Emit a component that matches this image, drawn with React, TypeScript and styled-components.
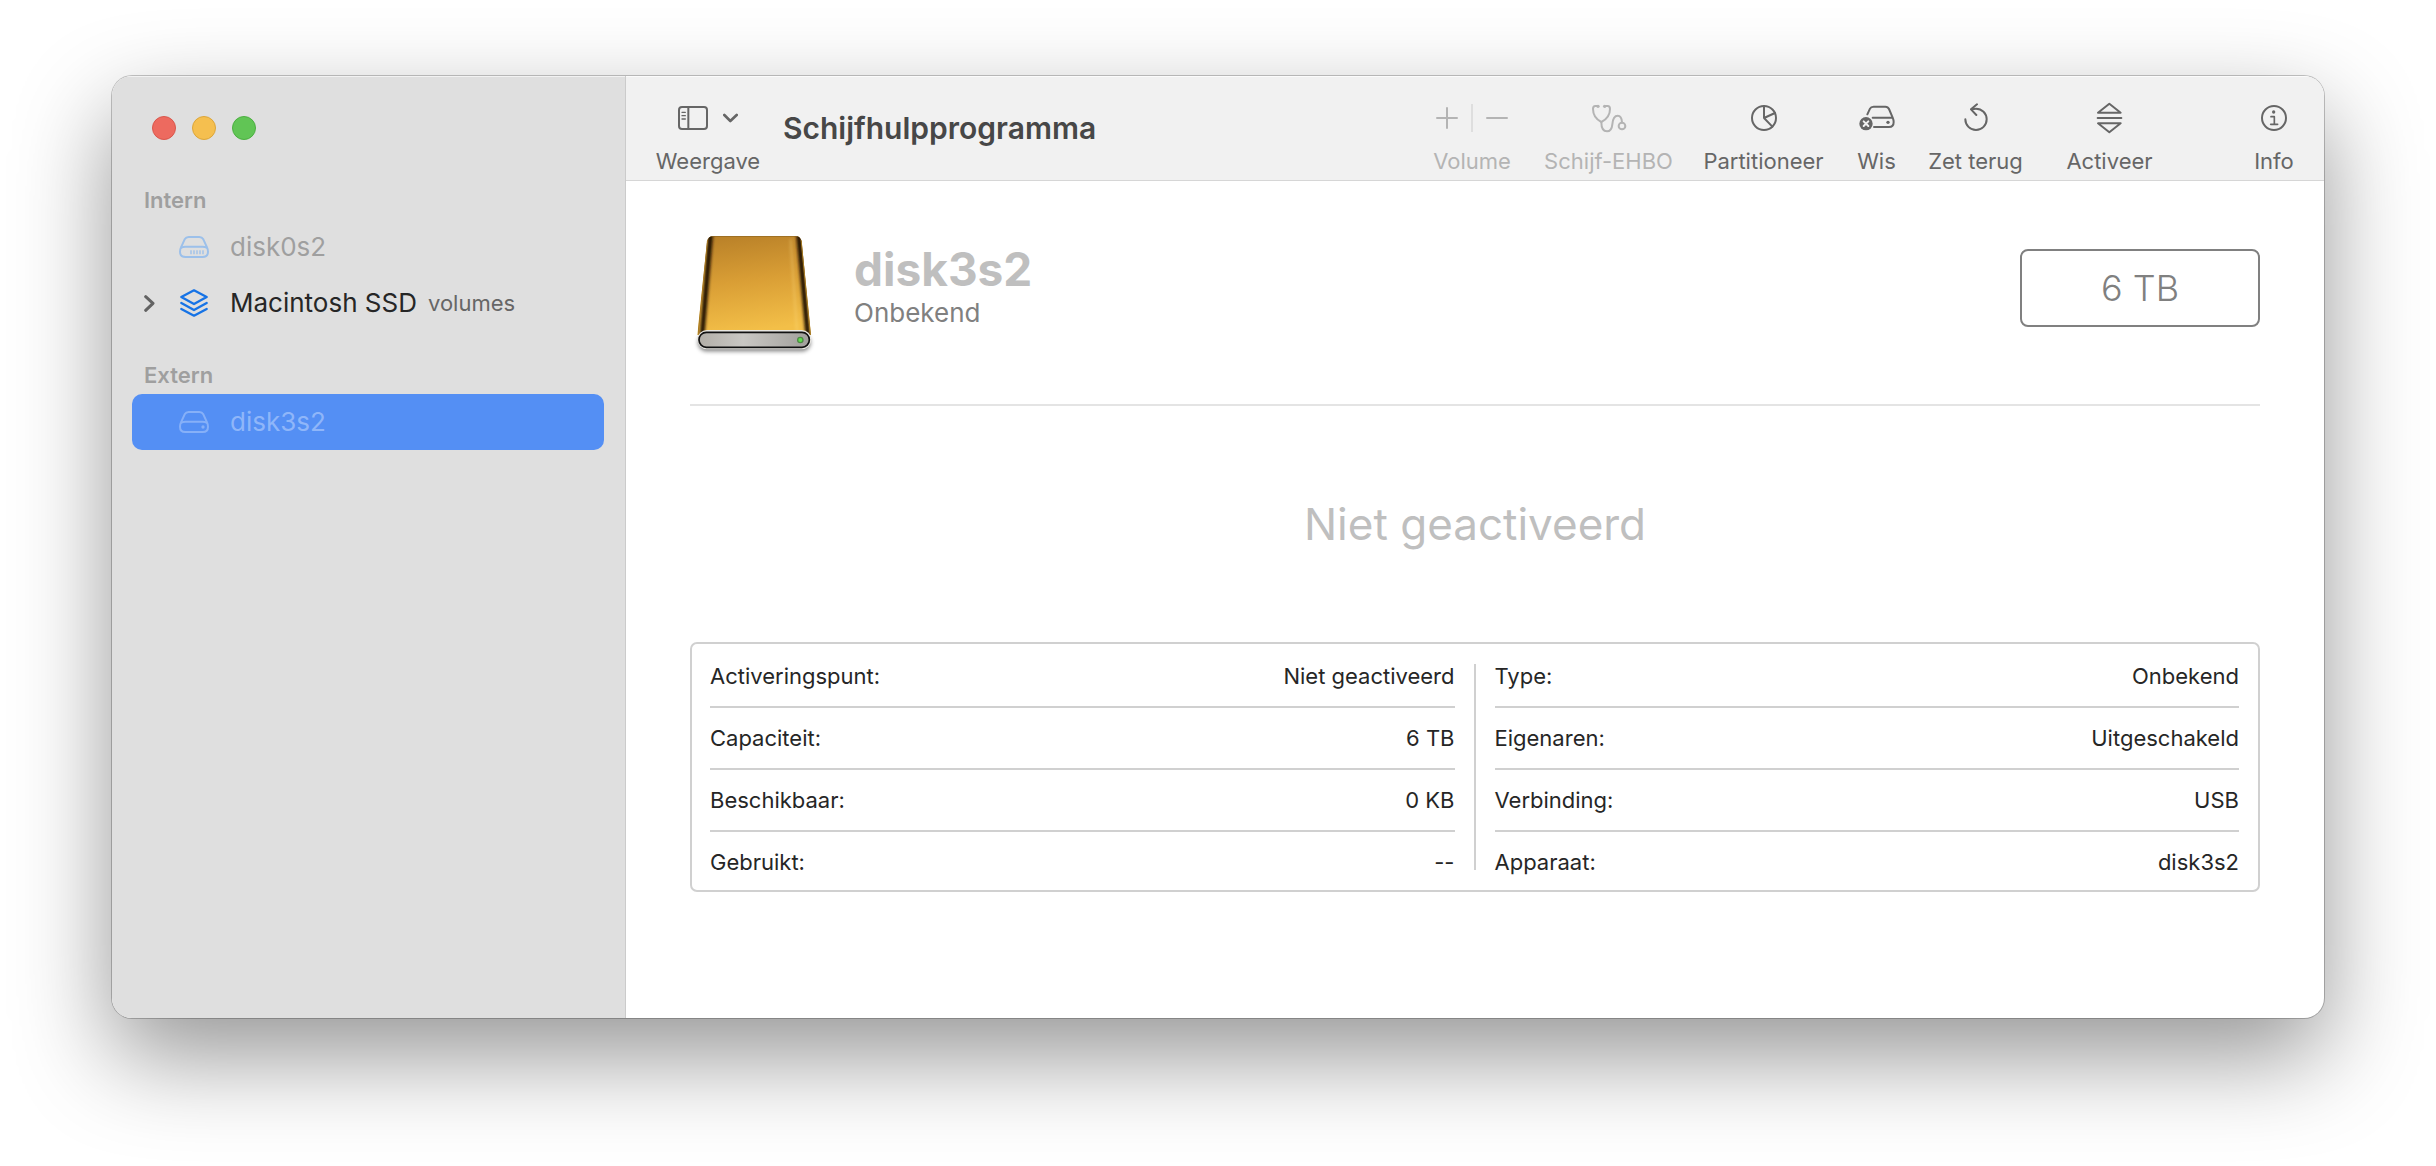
import React from "react";
import styled, { createGlobalStyle } from "styled-components";

const GlobalStyle = createGlobalStyle`
  * { box-sizing: border-box; }
  body {
    margin: 0;
    background: #fff;
    font-family: Inter, "Liberation Sans", sans-serif;
    color: #262626;
  }
  button {
    font: inherit;
    color: inherit;
    background: none;
    border: 0;
    padding: 0;
    margin: 0;
    text-align: left;
  }
  svg { display: block; flex: none; }
`;

const Desktop = styled.div`
  padding: 76px 112px 148px;
`;

const Window = styled.div`
  display: flex;
  border-radius: 20px;
  overflow: hidden;
  background: #fff;
  box-shadow:
    0 0 0 1px rgba(0, 0, 0, 0.22),
    0 38px 96px rgba(0, 0, 0, 0.42);
`;

const Sidebar = styled.aside`
  flex: none;
  width: 514px;
  padding: 40px 21px 0 20px;
  background: #dfdfdf;
  border-right: 1px solid #cbcbcb;
  box-shadow: inset 0 1px 0 #f2f2f2;
`;

const TrafficLights = styled.div`
  display: flex;
  gap: 16px;
  padding-left: 20px;
  margin-bottom: 41px;
`;

const Light = styled.button<{ $fill: string; $edge: string }>`
  width: 24px;
  height: 24px;
  border-radius: 50%;
  background: ${(p) => p.$fill};
  border: 1px solid ${(p) => p.$edge};
`;

const Group = styled.section`
  margin-bottom: 25px;
`;

const GroupTitle = styled.h2`
  margin: 0;
  padding-left: 12px;
  font-size: 22px;
  line-height: 38px;
  font-weight: 600;
  color: #9f9f9f;
`;

const Row = styled.button<{ $selected?: boolean; $dim?: boolean }>`
  display: flex;
  align-items: center;
  width: 100%;
  height: 56px;
  padding-left: 12px;
  border-radius: 10px;
  font-size: 26px;
  line-height: 32px;
  background: ${(p) => (p.$selected ? "#548ff4" : "transparent")};
  color: ${(p) => (p.$selected ? "#8fb6f9" : p.$dim ? "#9f9f9f" : "#262626")};
`;

const Disclosure = styled.span`
  width: 35px;
  color: #636363;
`;

const RowIcon = styled.span<{ $color: string }>`
  display: flex;
  justify-content: center;
  width: 30px;
  margin-right: 21px;
  color: ${(p) => p.$color};
`;

const RowNote = styled.span`
  margin-left: 11px;
  font-size: 22px;
  color: #666;
`;

const Main = styled.main`
  flex: 1;
  min-width: 0;
`;

const Toolbar = styled.header`
  display: flex;
  align-items: center;
  height: 105px;
  padding: 0 15px 0 16px;
  background: #f1f1f1;
  border-bottom: 1px solid #d6d6d6;
  box-shadow: inset 0 1px 0 #fbfbfb;
`;

const Tool = styled.div<{ $width: number; $off?: boolean; $apart?: boolean }>`
  display: flex;
  flex-direction: column;
  align-items: center;
  gap: 10px;
  width: ${(p) => p.$width}px;
  margin-left: ${(p) => (p.$apart ? 55 : 0)}px;
  padding-top: 16px;
  color: ${(p) => (p.$off ? "#b4b4b4" : "#666")};
`;

const ToolButton = styled(Tool).attrs({ as: "button" })``;

const ToolIcon = styled.span<{ $gap?: number }>`
  display: flex;
  align-items: center;
  justify-content: center;
  gap: ${(p) => p.$gap ?? 0}px;
  height: 40px;
`;

const ToolLabel = styled.span`
  font-size: 22px;
  line-height: 26px;
  white-space: nowrap;
`;

const Separator = styled.span`
  width: 2px;
  height: 28px;
  background: #dedede;
`;

const WindowTitle = styled.h1`
  flex: 1;
  margin: 0;
  padding-left: 9px;
  font-size: 30px;
  line-height: 40px;
  font-weight: 600;
  color: #474747;
`;

const Content = styled.div`
  padding: 39px 64px 126px;
`;

const Device = styled.section`
  display: flex;
  align-items: center;
  padding-bottom: 48px;
  border-bottom: 2px solid #e4e4e4;
`;

const DeviceText = styled.div`
  flex: 1;
  padding: 6px 0 0 36px;
`;

const DeviceName = styled.h2`
  margin: 0;
  font-size: 46px;
  line-height: 44px;
  font-weight: 700;
  color: #bfbfbf;
`;

const DeviceKind = styled.p`
  margin: 0;
  font-size: 26px;
  line-height: 44px;
  color: #808080;
`;

const Capacity = styled.div`
  width: 240px;
  border: 2px solid #808080;
  border-radius: 8px;
  font-size: 36px;
  line-height: 74px;
  font-weight: 300;
  text-align: center;
  color: #808080;
`;

const Status = styled.p`
  margin: 0;
  padding: 88px 0;
  font-size: 44px;
  line-height: 60px;
  text-align: center;
  color: #bfbfbf;
`;

const Details = styled.section`
  display: grid;
  grid-template-columns: 1fr 2px 1fr;
  column-gap: 19px;
  padding: 2px 19px 0 18px;
  border: 2px solid #d0d0d0;
  border-radius: 7px;
`;

const DetailsDivider = styled.div`
  margin: 18px 0 20px;
  background: #d0d0d0;
`;

const DetailTable = styled.table`
  width: 100%;
  border-spacing: 0;
  font-size: 22px;
  line-height: 30px;
  color: #262626;

  th, td {
    padding: 15px 0;
    border-bottom: 2px solid #d0d0d0;
  }
  tr:last-child > * {
    padding-bottom: 13px;
    border-bottom: 0;
  }
  th {
    font-weight: 400;
    text-align: left;
  }
  td {
    text-align: right;
  }
`;

const line = {
  fill: "none",
  stroke: "currentColor",
  strokeWidth: 6,
  strokeLinecap: "round",
  strokeLinejoin: "round",
} as const;

const DriveIcon = ({ vents }: { vents?: boolean }) => (
  <svg width="30" height="22" viewBox="0 0 90 66" {...line}>
    <path d="M17 10Q21 3 29 3H61Q69 3 73 10L84 34Q87 40 87 47Q87 63 71 63H19Q3 63 3 47Q3 40 6 34Z" />
    <path d="M7 35Q12 32 19 32H71Q78 32 83 35" />
    {vents ? (
      <path strokeWidth="4" strokeLinecap="butt" d="M36 43V55M45 43V55M54 43V55M63 43V55M72 43V55" />
    ) : (
      <circle cx="72" cy="48" r="5" fill="currentColor" stroke="none" />
    )}
  </svg>
);

const LayersIcon = () => (
  <svg width="28" height="28" viewBox="-1 0 84 84" {...line} strokeWidth="7">
    <path d="M41 4L79 24L41 45L3 24Z" />
    <path d="M3 42L41 63L79 42M3 60L41 80L79 60" />
  </svg>
);

const ChevronRight = () => (
  <svg width="11" height="17" viewBox="0 0 33 51" {...line} strokeWidth="9">
    <path d="M5 5L27 25L5 46" />
  </svg>
);

const SidebarIcon = () => (
  <svg width="30" height="24" viewBox="0 0 90 72" {...line}>
    <rect x="3" y="3" width="84" height="66" rx="9" />
    <path d="M31 3V69" />
    <path strokeWidth="4" d="M12 19H22M12 29H22M12 39H22" />
  </svg>
);

const ChevronDown = () => (
  <svg width="15" height="10" viewBox="0 0 45 30" {...line} strokeWidth="8">
    <path d="M4 6L22 24L41 6" />
  </svg>
);

const PlusIcon = () => (
  <svg width="22" height="22" viewBox="0 0 66 66" {...line}>
    <path d="M33 3V63M3 33H63" />
  </svg>
);

const MinusIcon = () => (
  <svg width="22" height="22" viewBox="0 0 66 66" {...line}>
    <path d="M3 33H63" />
  </svg>
);

const StethoscopeIcon = () => (
  <svg width="36" height="30" viewBox="0 0 108 90" {...line}>
    <path d="M21 9H13Q6 9 6 18Q6 44 31 57Q57 44 57 18Q57 9 50 9H41" />
    <path d="M31 57Q31 85 48 85Q62 85 64 64Q66 38 80 38Q92 38 93 58" />
    <circle cx="93" cy="69" r="10" />
    <circle cx="21" cy="10" r="5" fill="currentColor" stroke="none" />
    <circle cx="41" cy="10" r="5" fill="currentColor" stroke="none" />
  </svg>
);

const PieIcon = () => (
  <svg width="28" height="28" viewBox="0 0 84 84" {...line}>
    <circle cx="42" cy="42" r="36" />
    <path d="M42 6V42L75 27M42 42L67 68" />
  </svg>
);

const EraseIcon = () => (
  <svg width="36" height="26" viewBox="0 0 108 78" {...line}>
    <path d="M25 28L33 11Q36 5 44 5H79Q87 5 90 12L101 38Q104 45 104 51Q104 66 90 66H45" />
    <path d="M41 38H98" />
    <circle cx="87" cy="52" r="5" fill="currentColor" stroke="none" />
    <circle cx="21" cy="56" r="20" fill="currentColor" stroke="none" />
    <path stroke="#f1f1f1" d="M14 49L28 63M28 49L14 63" />
  </svg>
);

const RestoreIcon = () => (
  <svg width="26" height="30" viewBox="0 0 78 90" {...line}>
    <path d="M7 49A32 32 0 1 0 39 17Q32 17 26 19" />
    <path d="M42 4L24 19L40 36" />
  </svg>
);

const MountIcon = () => (
  <svg width="27" height="32" viewBox="0 0 81 96" {...line}>
    <path d="M40 5L74 32H6ZM5 48H76M6 64H74L40 91Z" />
  </svg>
);

const InfoIcon = () => (
  <svg width="28" height="28" viewBox="0 0 84 84" {...line}>
    <circle cx="42" cy="42" r="36" />
    <circle cx="41" cy="24" r="5" fill="currentColor" stroke="none" />
    <path strokeWidth="5" d="M33 38H43V61M32 61H53" />
  </svg>
);

const ExternalDrive = () => (
  <svg width="128" height="136" viewBox="0 0 384 408" role="img" aria-label="Externe schijf">
    <defs>
      <linearGradient id="gold" x1="0" y1="0" x2="0.15" y2="1">
        <stop offset="0" stopColor="#b67e27" />
        <stop offset="0.5" stopColor="#d99e35" />
        <stop offset="1" stopColor="#f3bf48" />
      </linearGradient>
      <linearGradient id="steel" x1="0" y1="0" x2="1" y2="0">
        <stop offset="0" stopColor="#b3afa8" />
        <stop offset="0.4" stopColor="#c9c7c3" />
        <stop offset="1" stopColor="#a19f9b" />
      </linearGradient>
      <clipPath id="case">
        <path d="M51 64Q54 48 72 48H316Q331 48 335 64L363 345H22Z" />
      </clipPath>
      <filter id="soft" x="-50%" y="-10%" width="200%" height="120%">
        <feGaussianBlur stdDeviation="5" />
      </filter>
      <filter id="ground" x="-10%" y="-50%" width="120%" height="200%">
        <feGaussianBlur stdDeviation="6" />
      </filter>
    </defs>
    <rect x="24" y="342" width="338" height="52" rx="26" fill="#000" opacity="0.5" filter="url(#ground)" />
    <g clipPath="url(#case)">
      <rect x="20" y="44" width="346" height="304" fill="url(#gold)" />
      <g fill="none" strokeLinecap="round" filter="url(#soft)">
        <path d="M62 44L36 350M326 44L354 350" stroke="#1a1000" strokeWidth="14" />
        <path d="M302 60L322 350" stroke="#ffe08a" strokeWidth="5" opacity="0.4" />
      </g>
      <path d="M52 60L24 345M334 60L362 345" stroke="#a87c26" strokeWidth="4" fill="none" />
      <path d="M60 49H328" stroke="#8c6420" strokeWidth="4" opacity="0.6" />
    </g>
    <rect x="22" y="330" width="342" height="58" rx="29" fill="#e9e7e2" />
    <rect x="27" y="337" width="331" height="45" rx="22" fill="url(#steel)" stroke="#111" strokeWidth="5" />
    <circle cx="331" cy="360" r="10" fill="#4f8a45" />
    <circle cx="331" cy="360" r="6" fill="#5fe04c" />
  </svg>
);

const DetailList = ({ rows }: { rows: [string, string][] }) => (
  <DetailTable>
    <tbody>
      {rows.map(([label, value]) => (
        <tr key={label}>
          <th scope="row">{label}</th>
          <td>{value}</td>
        </tr>
      ))}
    </tbody>
  </DetailTable>
);

const leftRows: [string, string][] = [
  ["Activeringspunt:", "Niet geactiveerd"],
  ["Capaciteit:", "6 TB"],
  ["Beschikbaar:", "0 KB"],
  ["Gebruikt:", "--"],
];

const rightRows: [string, string][] = [
  ["Type:", "Onbekend"],
  ["Eigenaren:", "Uitgeschakeld"],
  ["Verbinding:", "USB"],
  ["Apparaat:", "disk3s2"],
];

const tools = [
  { label: "Schijf-EHBO", width: 163, icon: <StethoscopeIcon />, off: true },
  { label: "Partitioneer", width: 147, icon: <PieIcon /> },
  { label: "Wis", width: 79, icon: <EraseIcon /> },
  { label: "Zet terug", width: 119, icon: <RestoreIcon /> },
  { label: "Activeer", width: 149, icon: <MountIcon /> },
  { label: "Info", width: 70, icon: <InfoIcon />, apart: true },
];

export default function App() {
  return (
    <>
      <GlobalStyle />
      <Desktop>
        <Window>
          <Sidebar>
            <TrafficLights>
              <Light aria-label="Sluit" $fill="#ed6a5f" $edge="#d9574c" />
              <Light aria-label="Minimaliseer" $fill="#f5bf4f" $edge="#dca63a" />
              <Light aria-label="Zoom" $fill="#61c555" $edge="#4caf41" />
            </TrafficLights>
            <Group>
              <GroupTitle>Intern</GroupTitle>
              <Row $dim>
                <Disclosure />
                <RowIcon $color="#9cc0ea"><DriveIcon vents /></RowIcon>
                disk0s2
              </Row>
              <Row>
                <Disclosure><ChevronRight /></Disclosure>
                <RowIcon $color="#1673e6"><LayersIcon /></RowIcon>
                Macintosh SSD
                <RowNote>volumes</RowNote>
              </Row>
            </Group>
            <Group>
              <GroupTitle>Extern</GroupTitle>
              <Row $selected>
                <Disclosure />
                <RowIcon $color="#86b0f8"><DriveIcon /></RowIcon>
                disk3s2
              </Row>
            </Group>
          </Sidebar>
          <Main>
            <Toolbar>
              <ToolButton $width={132}>
                <ToolIcon $gap={15}><SidebarIcon /><ChevronDown /></ToolIcon>
                <ToolLabel>Weergave</ToolLabel>
              </ToolButton>
              <WindowTitle>Schijfhulpprogramma</WindowTitle>
              <Tool $width={110} $off>
                <ToolIcon $gap={13}>
                  <button disabled aria-label="Voeg volume toe"><PlusIcon /></button>
                  <Separator />
                  <button disabled aria-label="Verwijder volume"><MinusIcon /></button>
                </ToolIcon>
                <ToolLabel>Volume</ToolLabel>
              </Tool>
              {tools.map((t) => (
                <ToolButton key={t.label} $width={t.width} $off={t.off} $apart={t.apart}>
                  <ToolIcon>{t.icon}</ToolIcon>
                  <ToolLabel>{t.label}</ToolLabel>
                </ToolButton>
              ))}
            </Toolbar>
            <Content>
              <Device>
                <ExternalDrive />
                <DeviceText>
                  <DeviceName>disk3s2</DeviceName>
                  <DeviceKind>Onbekend</DeviceKind>
                </DeviceText>
                <Capacity>6 TB</Capacity>
              </Device>
              <Status>Niet geactiveerd</Status>
              <Details>
                <DetailList rows={leftRows} />
                <DetailsDivider />
                <DetailList rows={rightRows} />
              </Details>
            </Content>
          </Main>
        </Window>
      </Desktop>
    </>
  );
}
